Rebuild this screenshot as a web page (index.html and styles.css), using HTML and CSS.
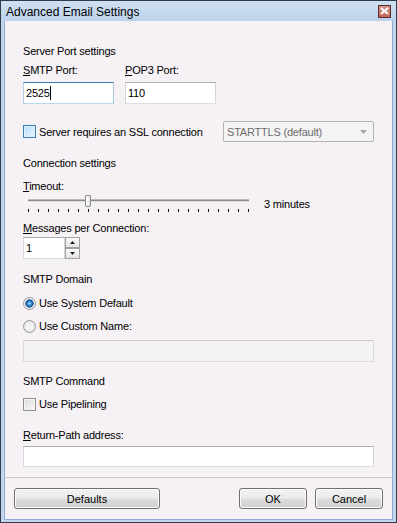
FILE: index.html
```html
<!DOCTYPE html>
<html lang="en">
<head>
  <meta charset="UTF-8">
  <title>Advanced Email Settings</title>
  <link rel="stylesheet" href="styles.css">
</head>
<body>
  <div class="window">
    <div class="titlebar">
      <span class="title">Advanced Email Settings</span>
      <div class="close-btn">
        <svg width="9" height="8" viewBox="0 0 9 8"><path d="M1 1 L8 7 M8 1 L1 7" stroke="#fff" stroke-width="2"/></svg>
      </div>
    </div>

    <div class="content">
      <div class="heading first">Server Port settings</div>
      <div class="port-row">
        <div class="field">
          <label><u>S</u>MTP Port:</label>
          <div class="textbox focused small">2525<span class="caret"></span></div>
        </div>
        <div class="field">
          <label><u>P</u>OP3 Port:</label>
          <div class="textbox small">110</div>
        </div>
      </div>

      <div class="ssl-row">
        <div class="check-item">
          <span class="checkbox hot"></span>
          <span>Server requires an SSL connection</span>
        </div>
        <div class="select">
          <span>STARTTLS (default)</span>
          <svg width="7" height="4" viewBox="0 0 7 4"><path d="M0 0 H7 L3.5 4 Z" fill="#a8a8a8"/></svg>
        </div>
      </div>

      <div class="heading sec-conn">Connection settings</div>
      <div class="line timeout-label"><u>T</u>imeout:</div>
      <div class="slider-row">
        <div class="slider">
          <div class="track"></div>
          <div class="thumb"></div>
          <div class="ticks" id="ticks"></div>
        </div>
        <span class="slider-value">3 minutes</span>
      </div>

      <div class="line msg-label"><u>M</u>essages per Connection:</div>
      <div class="spinner">
        <div class="textbox spin-box">1</div>
        <div class="spin-btns">
          <div class="spin-btn"><svg width="5" height="3" viewBox="0 0 5 3"><path d="M2.5 0 L5 3 H0 Z" fill="#222"/></svg></div>
          <div class="spin-btn"><svg width="5" height="3" viewBox="0 0 5 3"><path d="M0 0 H5 L2.5 3 Z" fill="#222"/></svg></div>
        </div>
      </div>

      <div class="heading sec-domain">SMTP Domain</div>
      <div class="check-item radio-first">
        <span class="radio checked"></span>
        <span>Use System Default</span>
      </div>
      <div class="check-item radio-second">
        <span class="radio"></span>
        <span>Use Custom Name:</span>
      </div>
      <div class="textbox wide disabled"></div>

      <div class="heading sec-cmd">SMTP Command</div>
      <div class="check-item pipe-row">
        <span class="checkbox"></span>
        <span>Use Pipelining</span>
      </div>

      <div class="line return-label"><u>R</u>eturn-Path address:</div>
      <div class="textbox wide return-box"></div>
    </div>

    <div class="footer">
      <button class="btn defaults">Defaults</button>
      <div class="footer-right">
        <button class="btn">OK</button>
        <button class="btn">Cancel</button>
      </div>
    </div>
  </div>

  <script>
    const ticks = document.getElementById("ticks");
    for (let i = 0; i < 23; i++) {
      const t = document.createElement("span");
      t.className = "tick";
      ticks.appendChild(t);
    }
  </script>
</body>
</html>
```

FILE: styles.css
```css
body {
  margin: 0;
  font-family: "Liberation Sans", Arial, sans-serif;
  font-size: 11px;
  letter-spacing: -0.2px;
  color: #000;
}

.window {
  width: 397px;
  height: 523px;
  box-sizing: border-box;
  border: 1px solid #2d3c4c;
  background: #c3d6ec;
  display: flex;
  flex-direction: column;
}

.titlebar {
  height: 20px;
  flex-shrink: 0;
  display: flex;
  align-items: center;
  justify-content: space-between;
  padding: 0 5px 0 5px;
  background: linear-gradient(#cfe0f2, #bcd3ec);
}

.title {
  font-size: 12px;
  letter-spacing: 0;
  color: #000;
  padding-top: 1px;
}

.close-btn {
  width: 11px;
  height: 11px;
  border: 1px solid #5d2a28;
  background: linear-gradient(#d9968c, #c0645a);
  display: flex;
  align-items: center;
  justify-content: center;
}

.content {
  flex: 1;
  margin: 0 3px;
  border-left: 1px solid #8daed0;
  border-right: 1px solid #8daed0;
  background: #f5f1f5;
  padding: 0 18px;
  display: flex;
  flex-direction: column;
}

.heading, .line, label {
  line-height: 14px;
  height: 14px;
  white-space: nowrap;
}

.heading.first { margin-top: 23px; }

.port-row {
  display: flex;
  gap: 11px;
  margin-top: 5px;
}

.field {
  display: flex;
  flex-direction: column;
  gap: 5px;
}

.textbox {
  box-sizing: border-box;
  height: 22px;
  flex-shrink: 0;
  background: #fff;
  border: 1px solid;
  border-color: #abadb3 #d3d6db #dadde2 #d3d6db;
  padding: 3px 2px;
  line-height: 14px;
}

.textbox.small { width: 91px; }

.textbox.focused {
  border-color: #3d7bad #a4c9e3 #b7d9ed #b5cfe7;
}

.caret {
  display: inline-block;
  width: 1px;
  height: 14px;
  background: #000;
  vertical-align: top;
}

.ssl-row {
  display: flex;
  justify-content: space-between;
  align-items: center;
  margin-top: 17px;
  height: 21px;
}

.check-item {
  display: flex;
  align-items: center;
  gap: 3px;
  height: 14px;
  line-height: 14px;
  white-space: nowrap;
}

.checkbox {
  width: 11px;
  height: 11px;
  flex-shrink: 0;
  border: 1px solid #8e8f8f;
  background: linear-gradient(135deg, #dcdcdc, #f8f8f8);
  box-shadow: inset 0 0 0 1px #f4f4f4;
}

.checkbox.hot {
  border-color: #3c7fb1;
  background: linear-gradient(135deg, #b9dcfa, #e9f5ff);
  box-shadow: inset 0 0 0 1px #def0fd;
}

.select {
  box-sizing: border-box;
  width: 151px;
  height: 21px;
  border: 1px solid #b5b2b5;
  border-radius: 2px;
  background: #f5f4f5;
  color: #6d6d6d;
  display: flex;
  align-items: center;
  justify-content: space-between;
  padding: 0 6px 0 3px;
}

.heading.sec-conn { margin-top: 14px; }
.timeout-label { margin-top: 9px; }

.slider-row {
  display: flex;
  align-items: flex-start;
  height: 21px;
  margin-top: 1px;
}

.slider {
  width: 230px;
  height: 21px;
  position: relative;
}

.track {
  position: absolute;
  left: 5px;
  right: 4px;
  top: 5px;
  height: 1px;
  background: #8e8e8e;
  border-bottom: 1px solid #dcdcdc;
  border-top: 1px solid #b8b8b8;
}

.thumb {
  position: absolute;
  left: 62px;
  top: 1px;
  width: 4px;
  height: 10px;
  background: linear-gradient(90deg, #fff, #e2e2e2);
  border: 1px solid #8d8d8d;
  border-radius: 1px 1px 2px 2px;
}

.ticks {
  position: absolute;
  left: 5px;
  right: 4px;
  top: 15px;
  display: flex;
  justify-content: space-between;
}

.tick {
  width: 1px;
  height: 3px;
  background: #000;
}

.slider-value {
  margin-left: 11px;
  margin-top: 3px;
  line-height: 14px;
}

.msg-label { margin-top: 6px; }

.spinner {
  display: flex;
  margin-top: 2px;
}

.spin-box {
  width: 42px;
}

.spin-btns {
  display: flex;
  flex-direction: column;
}

.spin-btn {
  box-sizing: border-box;
  width: 15px;
  height: 11px;
  border: 1px solid #a0a0a0;
  background: linear-gradient(#fbfbfb, #e4e4e4);
  display: flex;
  align-items: center;
  justify-content: center;
}

.heading.sec-domain { margin-top: 13px; }

.radio {
  width: 11px;
  height: 11px;
  flex-shrink: 0;
  border-radius: 50%;
  border: 1px solid #9a9a9a;
  background: radial-gradient(circle, #f3f3f3 40%, #d7d7d7);
}

.radio.checked {
  background: radial-gradient(circle, #a3dcff 0, #1b6fb8 35%, #0c4f8f 50%, #f2f2f2 56%, #d2d2d2 100%);
}

.radio-first { margin-top: 10px; }
.radio-second { margin-top: 9px; }

.textbox.wide { width: 351px; }

.textbox.disabled {
  margin-top: 7px;
  background: #f4f2f4;
  border-color: #c9c9c9 #dcdcdc #dcdcdc #dcdcdc;
}

.heading.sec-cmd { margin-top: 12px; }
.pipe-row { margin-top: 9px; }

.return-label { margin-top: 17px; }

.return-box {
  margin-top: 4px;
  height: 21px;
}

.footer {
  height: 43px;
  flex-shrink: 0;
  box-sizing: border-box;
  margin: 0 3px 2px 3px;
  border-left: 1px solid #8daed0;
  border-right: 1px solid #8daed0;
  border-bottom: 1px solid #8daed0;
  background: #f5f1f5;
  border-top: 1px solid #c8c6c8;
  padding: 10px 9px 0 9px;
  display: flex;
  justify-content: space-between;
  align-items: flex-start;
}

.footer-right {
  display: flex;
  gap: 8px;
}

.btn {
  box-sizing: border-box;
  height: 21px;
  width: 68px;
  border: 1px solid #707070;
  border-radius: 3px;
  background: linear-gradient(#f2f2f2 0%, #ebebeb 48%, #dddddd 52%, #cfcfcf 100%);
  box-shadow: inset 0 0 0 1px #fcfcfc;
  font-family: "Liberation Sans", Arial, sans-serif;
  font-size: 11px;
  color: #000;
  padding: 0;
}

.btn.defaults { width: 146px; }
```
